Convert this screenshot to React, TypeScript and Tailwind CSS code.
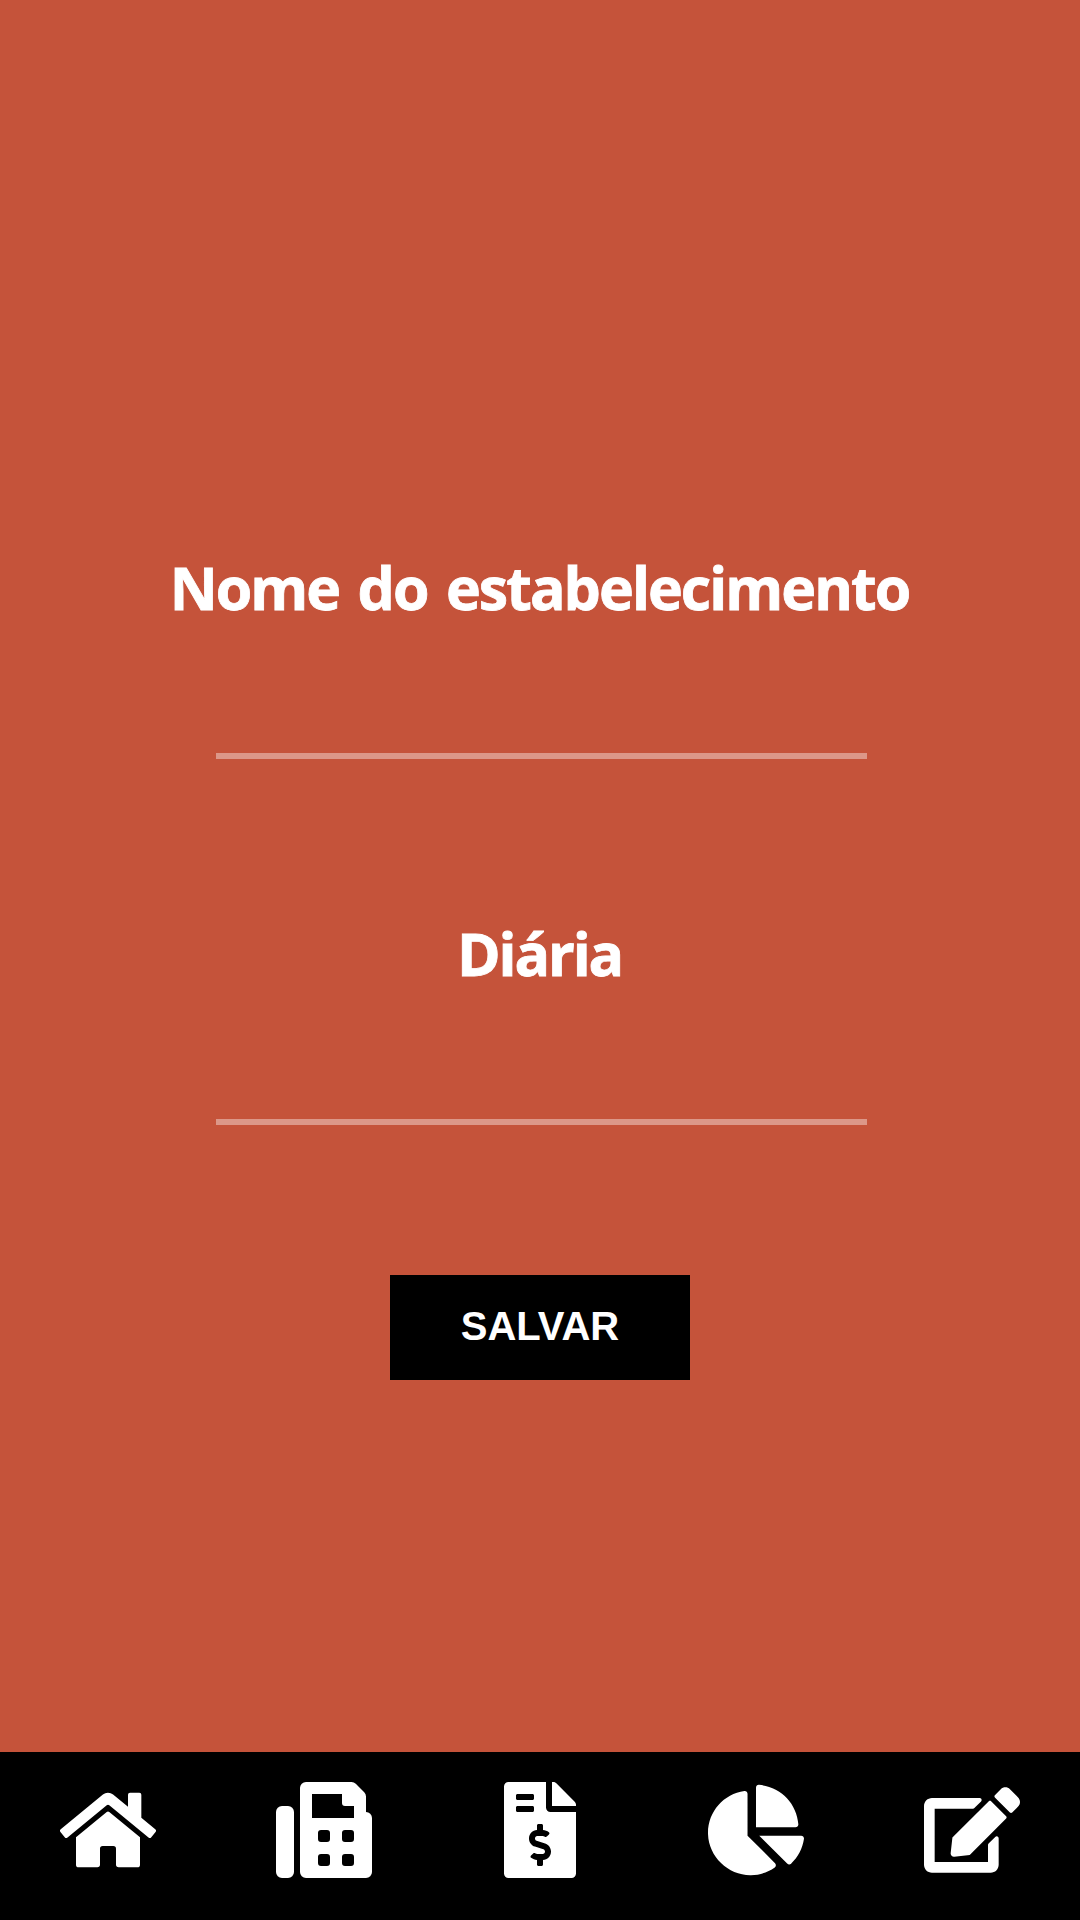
import { FaHome, FaFax, FaFileInvoiceDollar, FaChartPie, FaEdit } from "react-icons/fa";

const fieldLabel = "font-['Open_Sans',sans-serif] text-[59px] font-bold leading-[80px] text-white whitespace-nowrap [-webkit-text-stroke:0.8px_white]";
const fieldInput = "h-[96px] w-[651px] border-b-[6px] border-white/40 bg-transparent text-center text-[48px] text-white outline-none";

export default function App() {
  return (
    <div className="flex h-[1920px] w-[1080px] flex-col bg-[#c5533a]">
      <main className="flex flex-1 flex-col items-center pt-[547px]">
        <label htmlFor="name" className={`${fieldLabel} pr-px tracking-[-1.95px] [word-spacing:5px]`}>Nome do estabelecimento</label>
        <input id="name" className={`mt-9 ml-[3px] ${fieldInput}`} />
        <label htmlFor="daily" className={`mt-[154px] pr-px tracking-[-2.1px] ${fieldLabel}`}>Diária</label>
        <input id="daily" className={`mt-9 ml-[3px] ${fieldInput}`} />
        <button className="mt-[150px] h-[105px] w-[300px] bg-black pb-[3px] font-['Liberation_Sans',sans-serif] text-[40px] font-bold text-white">SALVAR</button>
      </main>
      <nav className="grid h-[168px] grid-cols-5 place-items-center bg-black pb-3 text-[96px] text-white">
        <FaHome /><FaFax /><FaFileInvoiceDollar /><FaChartPie /><FaEdit />
      </nav>
    </div>
  );
}
